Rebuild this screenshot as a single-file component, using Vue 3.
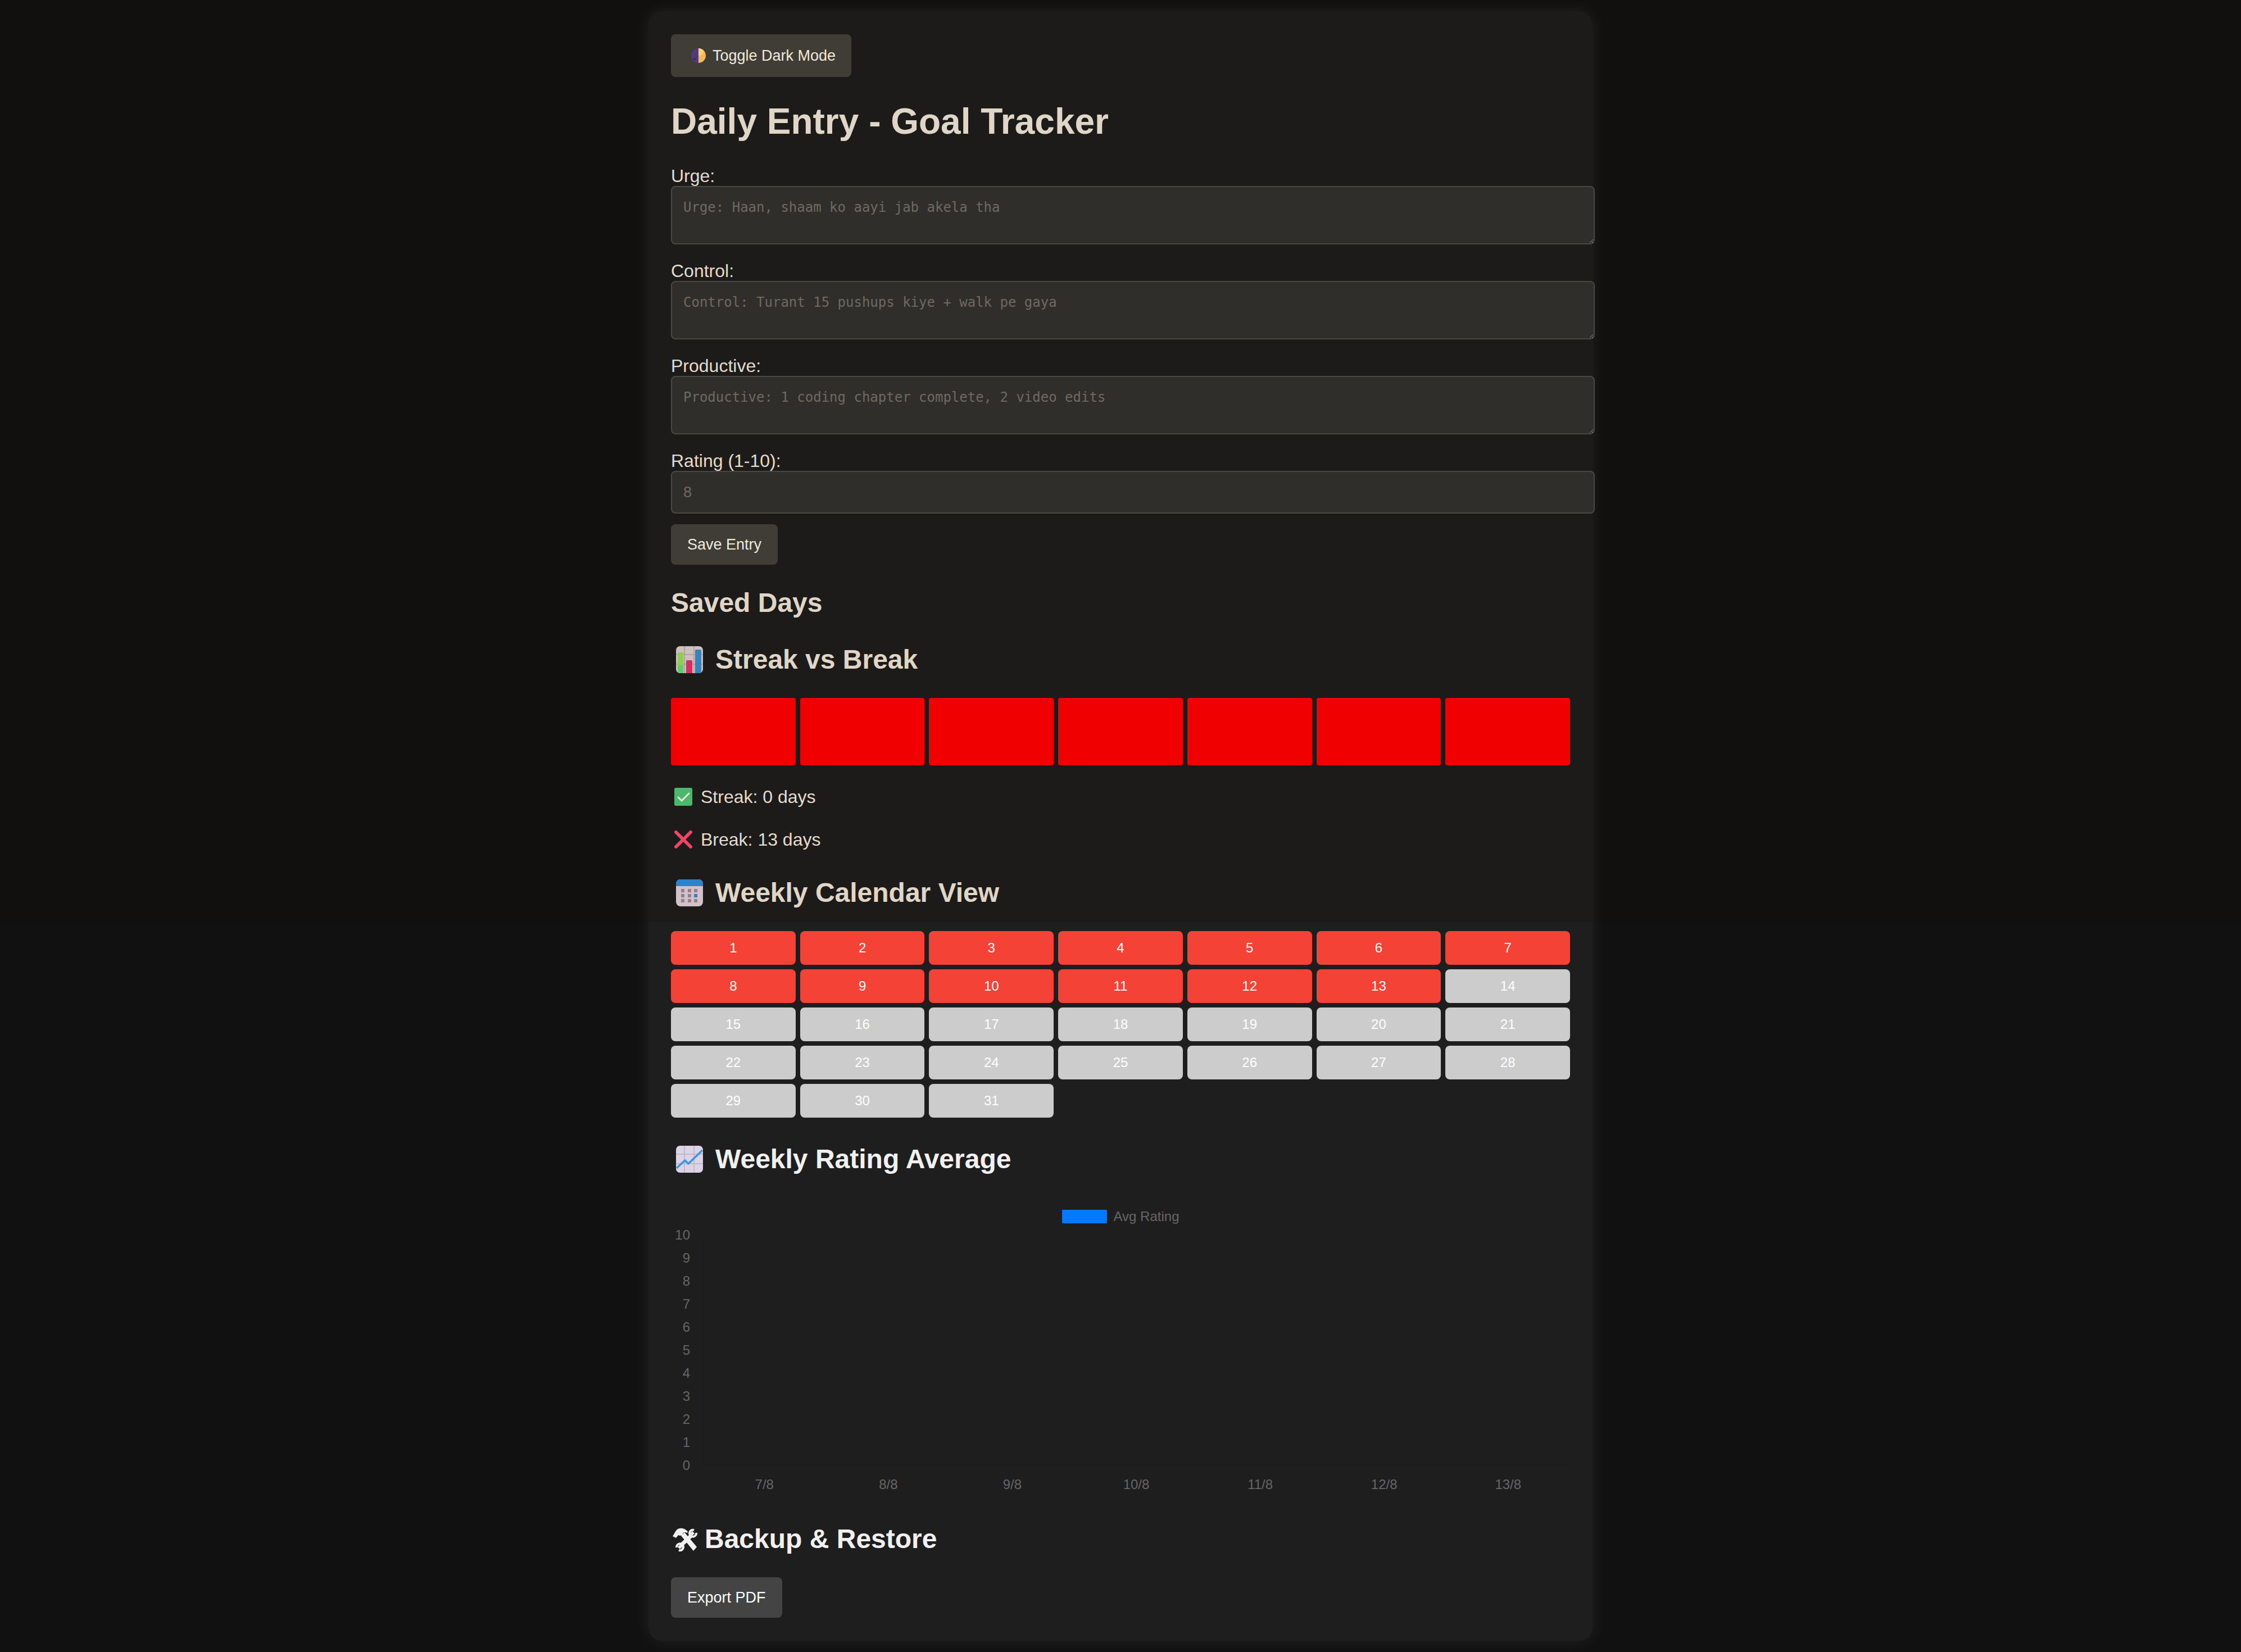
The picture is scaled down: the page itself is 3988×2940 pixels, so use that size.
<script setup>
import { ref } from 'vue'

const entry = ref({ urge: '', control: '', productive: '', rating: '' })

const fields = [
  { id: 'urge', label: 'Urge:', hint: 'Urge: Haan, shaam ko aayi jab akela tha' },
  { id: 'control', label: 'Control:', hint: 'Control: Turant 15 pushups kiye + walk pe gaya' },
  { id: 'productive', label: 'Productive:', hint: 'Productive: 1 coding chapter complete, 2 video edits' }
]

const breakDays = 13
const ticks = [10, 9, 8, 7, 6, 5, 4, 3, 2, 1, 0]
const dates = ['7/8', '8/8', '9/8', '10/8', '11/8', '12/8', '13/8']
</script>

<template>
  <main class="panel">
    <button type="button" class="btn toggle">
      <svg class="moon" viewBox="0 0 26 26" aria-hidden="true">
        <path d="M13 0a13 13 0 0 0 0 26z" fill="#54397a" />
        <path d="M13 0a13 13 0 0 1 0 26z" fill="#f2bb55" />
        <path d="M13 0a13 13 0 0 1 9 4c0 6-4 9-9 9z" fill="#f8d277" />
        <circle cx="6" cy="19" r="2" fill="#3c2959" />
      </svg>
      <span>Toggle Dark Mode</span>
    </button>

    <h1>Daily Entry - Goal Tracker</h1>

    <form @submit.prevent>
      <div v-for="f in fields" :key="f.id" class="field">
        <label :for="f.id">{{ f.label }}</label>
        <textarea :id="f.id" v-model="entry[f.id]" :placeholder="f.hint"></textarea>
      </div>
      <div class="field">
        <label for="rating">Rating (1-10):</label>
        <input id="rating" v-model="entry.rating" type="number" min="1" max="10" placeholder="8" />
      </div>
      <button type="submit" class="btn">Save Entry</button>
    </form>

    <h2>Saved Days</h2>

    <h2 class="with-icon">
      <svg class="icon" viewBox="0 0 48 48" aria-hidden="true">
        <rect width="48" height="48" rx="7" fill="#cfc0be" />
        <path d="M15 0v48M32 0v48M0 15h48M0 32h48" stroke="#a99b9c" stroke-width="1.5" />
        <path d="M3 13a2 2 0 0 1 2-2h6a2 2 0 0 1 2 2v35H7a6 6 0 0 1-4-2z" fill="#8bd052" />
        <path d="M3 34h10v14H7a6 6 0 0 1-4-2z" fill="#62c96c" />
        <path d="M18 27a2 2 0 0 1 2-2h7a2 2 0 0 1 2 2v21H18z" fill="#dc2b62" />
        <path d="M34 8a2 2 0 0 1 2-2h7a2 2 0 0 1 2 2v38a6 6 0 0 1-4 2h-7z" fill="#3484c4" />
      </svg>
      <span>Streak vs Break</span>
    </h2>
    <div class="bars">
      <div v-for="n in 7" :key="n" class="bar"></div>
    </div>
    <p>
      <svg class="mark" viewBox="0 0 32 32" aria-hidden="true">
        <rect width="32" height="32" rx="3" fill="#4bb86c" />
        <path d="M7 17l6 6L26 10" fill="none" stroke="#ede6d8" stroke-width="3" stroke-linecap="round" stroke-linejoin="round" />
      </svg>
      <span>Streak: 0 days</span>
    </p>
    <p>
      <svg class="mark" viewBox="0 0 32 32" aria-hidden="true">
        <path d="M3 3l26 26M29 3L3 29" stroke="#ee4666" stroke-width="6" stroke-linecap="round" />
      </svg>
      <span>Break: {{ breakDays }} days</span>
    </p>

    <h2 class="with-icon">
      <svg class="icon" viewBox="0 0 48 48" aria-hidden="true">
        <rect width="48" height="48" rx="8" fill="#d3c1ca" />
        <path d="M0 12V8a8 8 0 0 1 8-8h32a8 8 0 0 1 8 8v4z" fill="#2b83ca" />
        <path d="M9 17h6v6H9zM21 17h6v6h-6zM32 17h6v6h-6zM9 26h6v6H9zM21 26h6v6h-6zM9 35h6v6H9zM21 35h6v6h-6zM32 35h6v6h-6z" fill="#93828c" />
        <path d="M32 26h6v6h-6z" fill="#2b83ca" />
      </svg>
      <span>Weekly Calendar View</span>
    </h2>
    <div class="calendar">
      <div v-for="day in 31" :key="day" class="day" :class="{ missed: day <= breakDays }">{{ day }}</div>
    </div>

    <h2 class="with-icon cool">
      <svg class="icon" viewBox="0 0 48 48" aria-hidden="true">
        <rect width="48" height="48" rx="7" fill="#dcd3e6" />
        <path d="M15 0v48M32 0v48M0 15h48M0 32h48" stroke="#b9b0c4" stroke-width="1.5" />
        <path d="M1 40L16 26l6 6L47 8" fill="none" stroke="#3b97d8" stroke-width="3.5" stroke-linejoin="round" />
      </svg>
      <span>Weekly Rating Average</span>
    </h2>
    <figure class="chart">
      <figcaption class="legend"><span class="swatch"></span>Avg Rating</figcaption>
      <div class="plot">
        <div class="scale">
          <span v-for="t in ticks" :key="t">{{ t }}</span>
        </div>
        <div class="grid">
          <div v-for="d in dates" :key="d" class="col"></div>
        </div>
      </div>
      <div class="dates">
        <span v-for="d in dates" :key="d">{{ d }}</span>
      </div>
    </figure>

    <h2 class="with-icon cool">
      <svg class="tools" viewBox="10 19 45 43" aria-hidden="true">
        <path d="M11 35l6-10c4-6 15-6 21 2l-1 2c-4-2-7-1-8 1l-1 3-4 1-3-1-4 5z" fill="#f0f0f0" />
        <path d="M26 34l6-6 22 26-6 7z" fill="#f0f0f0" />
        <path d="M25 52l20-19" stroke="#f0f0f0" stroke-width="7" />
        <path d="M49 24A6 6 0 1 0 53 29M22 60A6 6 0 1 0 18 55" fill="none" stroke="#f0f0f0" stroke-width="4" />
        <path d="M44 28l4 4M22 52l4 4" stroke="#f0f0f0" stroke-width="6" />
      </svg>
      <span>Backup &amp; Restore</span>
    </h2>
    <button type="button" class="btn cool">Export PDF</button>
  </main>
</template>

<style>
body {
  background: linear-gradient(#11100f 1640px, #111111 1640px) no-repeat #111111;
}
</style>

<style scoped>
.panel {
  box-sizing: border-box;
  max-width: 1680px;
  margin: 20px auto;
  padding: 41px 40px;
  border-radius: 24px;
  background: linear-gradient(#1c1b19 1620px, #1e1e1e 1620px);
  box-shadow: 0 0 30px rgba(255, 255, 255, 0.08);
  color: #e3dccd;
  font-family: Arial, "Liberation Sans", sans-serif;
  font-size: 32px;
  line-height: 36px;
}

.btn {
  display: block;
  padding: 20px 29px;
  border: 0;
  border-radius: 8px;
  background: #403d37;
  color: #f0e9dc;
  font: 27px/32px Arial, "Liberation Sans", sans-serif;
}

.toggle {
  display: flex;
  align-items: center;
  gap: 12px;
  padding: 22px 28px 22px 36px;
}

.moon {
  width: 26px;
  height: 26px;
}

.btn.cool {
  background: #444444;
  color: #ffffff;
}

h1 {
  margin: 42px 0;
  color: #e0d6c8;
  font-size: 64px;
  line-height: 74px;
}

h2 {
  margin: 40px 0;
  color: #e0d6c8;
  font-size: 48px;
  line-height: 56px;
}

h2.cool {
  color: #f0f0f0;
}

.with-icon {
  display: flex;
  align-items: center;
  margin: 41px 0 36px;
  line-height: 64px;
}

.icon {
  width: 48px;
  height: 48px;
  margin: 0 22px 0 9px;
}

.tools {
  width: 45px;
  height: 43px;
  margin: 0 13px 0 2px;
}

.field {
  margin-bottom: 29px;
}

.field:last-of-type {
  margin-bottom: 19px;
}

label {
  display: block;
}

/* Controls keep content-box sizing, so padding and border run past the column. */
textarea,
input {
  display: block;
  box-sizing: content-box;
  width: 100%;
  padding: 20px;
  border: 2px solid #4a4843;
  border-radius: 8px;
  background: #302e2a;
  color: #e3dccd;
}

textarea {
  height: 60px;
  resize: vertical;
  font: 24px/32px "DejaVu Sans Mono", monospace;
}

input {
  height: 32px;
  font: 27px/32px Arial, "Liberation Sans", sans-serif;
}

textarea::placeholder,
input::placeholder {
  color: #6e6a62;
}

.bars,
.calendar {
  display: grid;
  grid-template-columns: repeat(7, 1fr);
  gap: 8px;
}

.bars {
  margin-bottom: 34px;
}

.calendar {
  margin-bottom: 42px;
}

.bar {
  height: 120px;
  border-radius: 4px;
  background: #f00000;
}

p {
  display: flex;
  align-items: center;
  margin: 32px 0;
  line-height: 44px;
}

.mark {
  width: 32px;
  height: 32px;
  margin: 0 15px 0 6px;
}

.day {
  padding: 16px 0;
  border-radius: 8px;
  background: #cccccc;
  color: #ffffff;
  font-size: 24px;
  line-height: 28px;
  text-align: center;
}

.missed {
  background: #f44336;
}

.chart {
  margin: 0;
  padding: 22px 0 10px;
  color: #666666;
  font-size: 24px;
  line-height: 28px;
}

.legend {
  display: flex;
  justify-content: center;
  align-items: center;
  gap: 12px;
  line-height: 24px;
}

.swatch {
  width: 80px;
  height: 24px;
  background: #007bff;
}

.plot {
  display: flex;
}

.scale {
  display: flex;
  flex-direction: column;
  width: 34px;
  margin-right: 22px;
  text-align: right;
}

.scale span {
  line-height: 41px;
}

.grid {
  display: flex;
  flex: 1;
  margin: 20px 0;
  border: solid rgba(0, 0, 0, 0.06);
  border-width: 0 0 2px 2px;
}

.col {
  flex: 1;
}

.dates {
  display: flex;
  margin-left: 56px;
}

.dates span {
  flex: 1;
  text-align: center;
}
</style>
